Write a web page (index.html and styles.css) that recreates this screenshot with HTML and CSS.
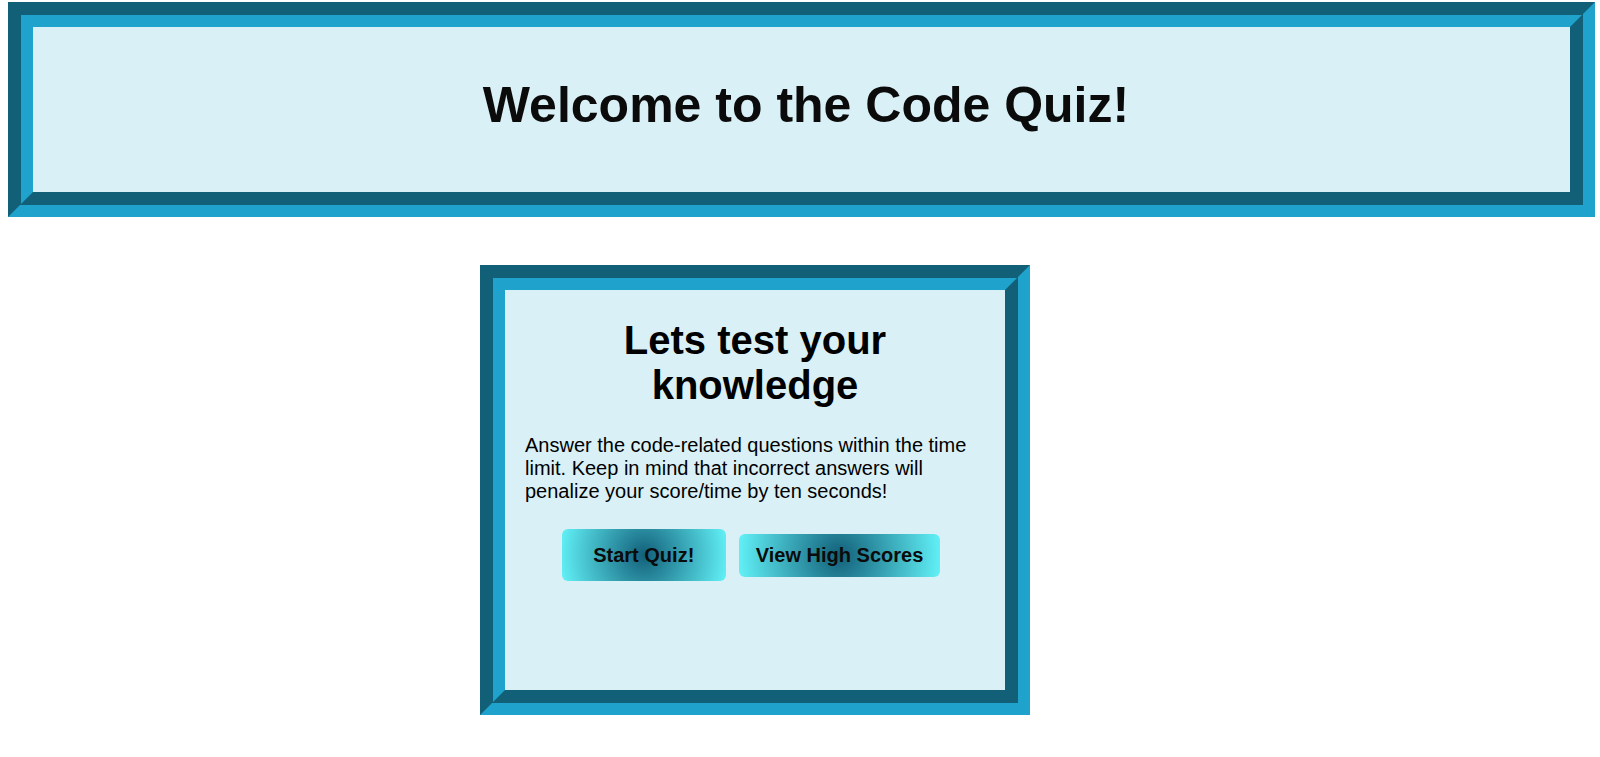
FILE: index.html
```html
<!DOCTYPE html>
<html lang="en">
<head>
<meta charset="utf-8">
<title>Code Quiz</title>
<link rel="stylesheet" href="styles.css">
</head>
<body>
<header class="banner">
  <h1 class="banner-title">Welcome to the Code Quiz!</h1>
</header>
<main class="card">
  <h2 class="card-title">Lets test your knowledge</h2>
  <p class="card-text">Answer the code-related questions within the time limit. Keep in mind that incorrect answers will penalize your score/time by ten seconds!</p>
  <div class="actions">
    <button class="btn btn-start" type="button">Start Quiz!</button>
    <button class="btn btn-scores" type="button">View High Scores</button>
  </div>
</main>
</body>
</html>
```
FILE: styles.css
```css
html, body {
  margin: 0;
  padding: 0;
  background: #ffffff;
}

body {
  font-family: "Liberation Sans", Arial, sans-serif;
  color: #0b0b0b;
}

.banner {
  margin: 2px 5px 0 8px;
  border: 25px groove #1fa3cc;
  background: #d9f0f6;
  padding: 49px 0 58px 9px;
  text-align: center;
}

.banner-title {
  margin: 0;
  font-size: 50px;
  font-weight: bold;
  line-height: normal;
}

.card {
  display: block;
  box-sizing: content-box;
  margin: 48px 0 0 480px;
  width: 460px;
  height: 372px;
  padding: 28px 20px 0 20px;
  border: 25px groove #1fa3cc;
  background: #d9f0f6;
  color: #000;
}

.card-title {
  margin: 0 0 26px;
  font-size: 40px;
  font-weight: bold;
  text-align: center;
  line-height: normal;
}

.card-text {
  margin: 0 0 26px;
  font-size: 20px;
  line-height: normal;
}

.actions {
  display: flex;
  justify-content: center;
  align-items: center;
  gap: 13px;
  padding-right: 8px;
}

.btn {
  font-family: "Liberation Sans", Arial, sans-serif;
  font-size: 20px;
  font-weight: bold;
  color: #0b0b0b;
  border: none;
  border-radius: 6px;
  background: radial-gradient(circle, #12607a, #62f2f7);
  line-height: normal;
  cursor: pointer;
}

.btn-start {
  padding: 14.5px 31.5px;
}

.btn-scores {
  padding: 10px 17px;
}
```
